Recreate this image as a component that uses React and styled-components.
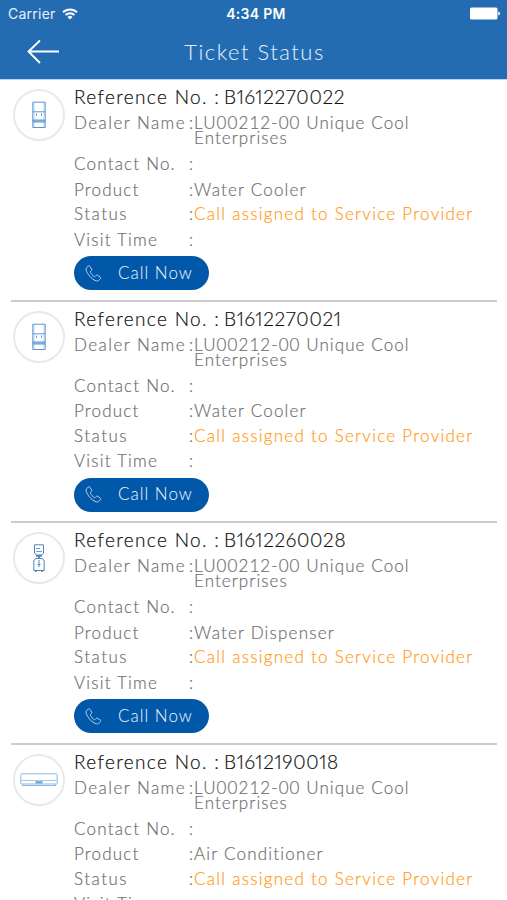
import React from 'react';
import styled, { createGlobalStyle } from 'styled-components';

const tickets = [
  { ref: 'B1612270022', product: 'Water Cooler', icon: 'cooler' },
  { ref: 'B1612270021', product: 'Water Cooler', icon: 'cooler' },
  { ref: 'B1612260028', product: 'Water Dispenser', icon: 'dispenser' },
  { ref: 'B1612190018', product: 'Air Conditioner', icon: 'ac' },
];

const CoolerIcon = () => (
  <svg width="14" height="28" viewBox="0 0 14 28" fill="none" stroke="#5b96d6">
    <path d="M.8 1.2h12.4v25.3H.8zM.8 10.8h12.4M.8 19h12.4M.8 21h12.4" />
    <path d="M2 1v25M12 1v25" strokeWidth=".4" />
    <path d="M4.5 12.5v2.3M9.5 12.5v2.3" />
    <path d="M1 20h12" strokeWidth="1.2" />
  </svg>
);

const DispenserIcon = () => (
  <svg width="12" height="28" viewBox="0 0 12 28" fill="none" stroke="#4f88b8">
    <path d="M1.5.8h9v8.5L8.2 11H3.8L1.5 9.3z" />
    <path d="M3 4.5h4M3 7.5h6" strokeWidth=".8" />
    <path d="M3 11.800h6M6 12v3" strokeWidth="1.8" />
    <path d="M2.5 14.5h7l1.7 2.5v9.5H.8V17z" />
    <path d="M6 16v7M4.5 20.5h3M2 27.3h2M8 27.3h2" />
  </svg>
);

const AcIcon = () => (
  <svg width="38" height="14" viewBox="0 0 38 14" fill="none" stroke="#8fb9e2">
    <rect x=".8" y=".8" width="36.4" height="10.2" rx=".8" />
    <path d="M1 7.5h36" strokeWidth=".8" />
    <path d="M2 12.5h34M2 11l1 1.5M36 11l-1 1.5" />
    <path d="M15.5 9.3h7" stroke="#6ca2d8" strokeWidth="2.2" />
  </svg>
);

const icons = { cooler: CoolerIcon, dispenser: DispenserIcon, ac: AcIcon };

const BackArrow = () => (
  <svg width="34" height="26" viewBox="0 0 34 26" fill="none" stroke="#fff" strokeWidth="1.9">
    <path d="M14 1.5 2.5 12.5 14 24M2.5 12.5H33" />
  </svg>
);

const WifiIcon = () => (
  <svg width="16" height="12" viewBox="0 0 16 12" fill="none" stroke="#fff" strokeWidth="1.9">
    <path d="M1 4.3a10 10 0 0 1 14 0M3.6 7a6.300 6.300 0 0 1 8.800 0" />
    <path d="M8 11.5 5.5 9a3.600 3.600 0 0 1 5 0z" fill="#fff" stroke="none" />
  </svg>
);

const BatteryIcon = () => (
  <svg width="31" height="13" viewBox="0 0 31 13" fill="#fff">
    <rect x="0" y=".5" width="27.5" height="12" rx="1.5" />
    <path d="M28.3 4.5c2.2.3 2.2 3.7 0 4z" />
  </svg>
);

const PhoneIcon = () => (
  <svg width="17" height="17" viewBox="0 0 17 17" fill="none" stroke="#c3daf0" strokeWidth=".9">
    <path d="M3.200 1.200 1.500 2.700c-1 1.200-.3 3.500 1.300 6 2 3 4.200 5.200 7.200 6.700 1.800.9 3.300.6 4.300-.5l1.100-1.300c.5-.6.4-1.200-.2-1.600l-2.500-1.700c-.6-.4-1.200-.3-1.600.2l-.8.9c-.5.5-1 .3-1.500 0C7.300 10.200 6.200 8.800 5.500 7.500c-.3-.6-.2-1 .2-1.400l.7-.6c.5-.5.5-1 .2-1.500L5 1.400c-.5-.7-1.200-.7-1.800-.2z" />
  </svg>
);

const Ticket = ({ ticket }) => {
  const Icon = icons[ticket.icon];
  return (
    <Card>
      <IconCircle>
        <Icon />
      </IconCircle>
      <Details>
        <Reference>
          <ReferenceLabel>Reference No. :</ReferenceLabel>
          {ticket.ref}
        </Reference>
        <Row $height="41.5px" $top="5px">
          <Label $tracking="1.45px">Dealer Name</Label>
          <Colon>:</Colon>
          <Value $tracking="1.08px">
            LU00212-00 Unique Cool
            <br />
            Enterprises
          </Value>
        </Row>
        <Row $height="25px" $top="4.5px">
          <Label>Contact No.</Label>
          <Colon>:</Colon>
        </Row>
        <Row $height="25.5px" $top="5px">
          <Label>Product</Label>
          <Colon>:</Colon>
          <Value>{ticket.product}</Value>
        </Row>
        <Row $height="24.5px" $top="4px">
          <Label $tracking="1.5px">Status</Label>
          <Colon>:</Colon>
          <Status $tracking="1.27px">Call assigned to Service Provider</Status>
        </Row>
        <Row $height="29.5px" $top="5px">
          <Label>Visit Time</Label>
          <Colon>:</Colon>
        </Row>
        <CallButton type="button">
          <PhoneIcon />
          <span>Call Now</span>
        </CallButton>
      </Details>
    </Card>
  );
};

const App = () => (
  <Screen>
    <GlobalStyle />
    <StatusBar>
      <Carrier>
        Carrier
        <WifiIcon />
      </Carrier>
      <Clock>4:34 PM</Clock>
      <Battery>
        <BatteryIcon />
      </Battery>
    </StatusBar>
    <NavBar>
      <BackButton aria-label="Back">
        <BackArrow />
      </BackButton>
      <Title>Ticket Status</Title>
    </NavBar>
    <List>
      {tickets.map(ticket => (
        <Ticket key={ticket.ref} ticket={ticket} />
      ))}
    </List>
  </Screen>
);

export default App;

const GlobalStyle = createGlobalStyle`
  * {
    box-sizing: border-box;
  }
  body {
    margin: 0;
    background: #fff;
    overflow: hidden;
  }
`;

const Screen = styled.div`
  display: flex;
  flex-direction: column;
  height: 900px;
  overflow: hidden;
  font-family: Lato, 'Open Sans', sans-serif;
  font-weight: 300;
  background: #fff;
`;

const StatusBar = styled.div`
  display: grid;
  grid-template-columns: 1fr auto 1fr;
  align-items: center;
  flex: none;
  height: 27px;
  padding: 0 6px 0 8px;
  font-family: Inter, sans-serif;
  font-size: 14px;
  color: #fff;
  background: #246cb1;
`;

const Carrier = styled.div`
  display: flex;
  align-items: center;
  gap: 6px;
  font-weight: 400;
  letter-spacing: 0.25px;
  color: #e6f1fb;
`;

const Clock = styled.div`
  padding-left: 3px;
  font-size: 14px;
  font-weight: 600;
  letter-spacing: 0.3px;
`;

const Battery = styled.div`
  display: flex;
  justify-content: flex-end;
`;

const NavBar = styled.div`
  display: grid;
  grid-template-columns: 100px 1fr 100px;
  align-items: center;
  flex: none;
  height: 53px;
  padding-bottom: 2px;
  border-bottom: 1px solid #b9d4ef;
  background: #246cb1;
`;

const BackButton = styled.button`
  display: flex;
  padding: 0 0 0 26px;
  border: 0;
  background: none;
`;

const Title = styled.div`
  padding: 0 0 2px 2px;
  text-align: center;
  font-size: 22px;
  letter-spacing: 1.5px;
  color: #e6f2ff;
`;

const List = styled.div`
  flex: 1;
  padding: 0 10px 0 11px;
  overflow: hidden;
`;

const Card = styled.div`
  display: flex;
  height: 221.5px;
  padding-top: 5px;
  border-bottom: 2px solid #ccc;
`;

const IconCircle = styled.div`
  display: flex;
  align-items: center;
  justify-content: center;
  flex: none;
  width: 52px;
  height: 52px;
  margin: 4px 9px 0 2px;
  border: 2px solid #e8e9eb;
  border-radius: 50%;
`;

const Details = styled.div`
  flex: 1;
  white-space: nowrap;
`;

const Reference = styled.div`
  display: flex;
  height: 25px;
  line-height: 24px;
  font-size: 19px;
  font-variant-numeric: proportional-nums;
  letter-spacing: 0.7px;
  color: #111;
  -webkit-text-stroke: 0.2px;
`;

const ReferenceLabel = styled.div`
  width: 150px;
  letter-spacing: 1.35px;
`;

const Row = styled.div`
  display: flex;
  height: ${({ $height }) => $height};
  padding-top: ${({ $top }) => $top};
  font-size: 17px;
  line-height: 15px;
  color: #707070;
  -webkit-text-stroke: 0.2px;
`;

const Label = styled.div`
  width: 115px;
  letter-spacing: ${({ $tracking }) => $tracking || '1.2px'};
`;

const Colon = styled.div`
  width: 5px;
`;

const Value = styled.div`
  flex: 1;
  letter-spacing: ${({ $tracking }) => $tracking || '1.2px'};
`;

const Status = styled(Value)`
  color: #ff9c1a;
`;

const CallButton = styled.button`
  display: flex;
  align-items: center;
  gap: 16px;
  width: 135px;
  height: 34px;
  padding: 0 0 2px 11px;
  border: 0;
  border-radius: 17px;
  font-family: inherit;
  font-size: 17px;
  font-weight: 300;
  letter-spacing: 1px;
  color: #f2f8ff;
  background: #0258a8;

  svg {
    margin-top: 2px;
  }
`;
